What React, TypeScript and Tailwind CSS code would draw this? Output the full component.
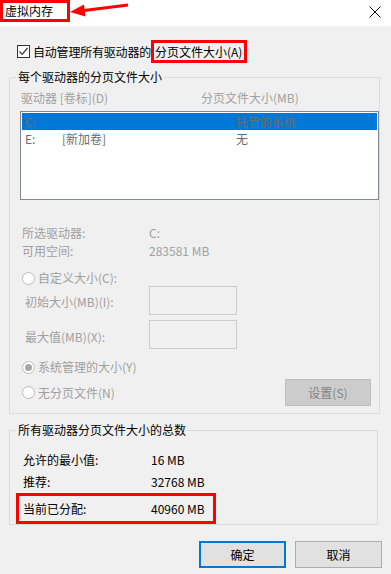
import React from 'react'

const font = { fontFamily: '"Noto Sans CJK SC", "Noto Sans", sans-serif' }

function Radio({ checked, label }: { checked?: boolean; label: string }) {
  return (
    <div className="flex items-center h-[18px]">
      <span className="ml-[12px] w-[13px] h-[13px] rounded-full border border-[#bcbcbc] bg-white flex items-center justify-center">
        {checked && <span className="w-[7px] h-[7px] rounded-full bg-[#a6a6a6]" />}
      </span>
      <span className="ml-[3px] text-[#a0a0a0]">{label}</span>
    </div>
  )
}

export default function App() {
  return (
    <div className="w-[391px] h-[574px] bg-[#f0f0f0] text-[12px] leading-[16px] text-black overflow-hidden" style={font}>
      {/* title bar */}
      <div className="relative h-[26px] bg-white flex items-start justify-between">
        <span className="h-[22px] w-[70px] border-[3px] border-[#ff0000] pl-[2px] flex items-center">虚拟内存</span>
        <svg className="absolute left-[60px] top-0" width="75" height="24" viewBox="0 0 75 24">
          <line x1="68" y1="5" x2="22" y2="10.7" stroke="#ff0000" strokeWidth="3" />
          <polygon points="10,12 25.5,16.5 24,4.5" fill="#ff0000" />
        </svg>
        <svg className="mt-[6px] mr-[10px]" width="12" height="12" viewBox="0 0 12 12">
          <path d="M0.5 0.5 L11.5 11.5 M11.5 0.5 L0.5 11.5" stroke="#111" strokeWidth="1" />
        </svg>
      </div>

      {/* auto manage checkbox */}
      <div className="mt-[14px] h-[23px] flex items-center">
        <span className="ml-[17px] w-[13px] h-[13px] border border-[#333] bg-white flex items-center justify-center">
          <svg width="11" height="11" viewBox="0 0 11 11">
            <path d="M1.5 5.5 L4.2 8.3 L9.5 2" fill="none" stroke="#333" strokeWidth="1.2" />
          </svg>
        </span>
        <span className="ml-[3px] tracking-[-0.2px]">自动管理所有驱动器的</span>
        <span className="h-[23px] border-[3px] border-[#ff0000] pl-[1px] pr-[2px] flex items-center">分页文件大小(A)</span>
      </div>

      {/* per-drive group */}
      <fieldset className="mt-[6px] ml-[9px] w-[369px] border border-[#dcdcdc] pb-[7px]">
        <legend className="ml-[6px] px-[2px]">每个驱动器的分页文件大小</legend>
        <div className="mt-[5px] pl-[11px] flex text-[#a0a0a0]">
          <span className="w-[180px]">驱动器 [卷标](D)</span>
          <span>分页文件大小(MB)</span>
        </div>
        <div className="mt-[5px] ml-[10px] w-[359px] h-[89px] border border-[#828790] bg-white p-[1px] text-[#6d6d6d]">
          <div className="h-[17px] bg-[#0078d7] flex items-center">
            <span className="pl-[3px] w-[214px]">C:</span>
            <span>托管的系统</span>
          </div>
          <div className="h-[17px] flex items-center">
            <span className="pl-[3px] w-[40px]">E:</span>
            <span className="w-[174px]">[新加卷]</span>
            <span>无</span>
          </div>
        </div>

        <div className="mt-[24px] text-[#a0a0a0]">
          <div className="h-[18px] flex items-center">
            <span className="pl-[12px] w-[139px]">所选驱动器:</span>
            <span>C:</span>
          </div>
          <div className="h-[18px] flex items-center">
            <span className="pl-[12px] w-[139px]">可用空间:</span>
            <span>283581 MB</span>
          </div>
        </div>

        <div className="mt-[9px]">
          <Radio label="自定义大小(C):" />
        </div>
        <div className="mt-[-1px] h-[29px] flex items-center text-[#a0a0a0]">
          <span className="pl-[15px] w-[139px] pt-[3px]">初始大小(MB)(I):</span>
          <span className="w-[88px] h-[29px] border border-[#cccccc] bg-[#f0f0f0]" />
        </div>
        <div className="mt-[5px] h-[29px] flex items-center text-[#a0a0a0]">
          <span className="pl-[15px] w-[139px] pt-[5px]">最大值(MB)(X):</span>
          <span className="w-[88px] h-[29px] border border-[#cccccc] bg-[#f0f0f0]" />
        </div>

        <div className="mt-[9px]">
          <Radio checked label="系统管理的大小(Y)" />
        </div>
        <div className="mt-[3px] h-[27px] flex items-center justify-between">
          <Radio label="无分页文件(N)" />
          <span className="mr-[8px] w-[86px] h-[27px] bg-[#cccccc] border border-[#bfbfbf] flex items-center justify-center text-[#838383]">
            设置(S)
          </span>
        </div>
      </fieldset>

      {/* totals group */}
      <fieldset className="mt-[8px] ml-[9px] w-[369px] border border-[#dcdcdc]">
        <legend className="ml-[6px] px-[2px]">所有驱动器分页文件大小的总数</legend>
        <div className="pt-[13px]">
          <div className="h-[18px] flex items-center">
            <span className="pl-[13px] w-[141px]">允许的最小值:</span>
            <span>16 MB</span>
          </div>
          <div className="mt-[4px] h-[18px] flex items-center">
            <span className="pl-[13px] w-[141px]">推荐:</span>
            <span>32768 MB</span>
          </div>
          <div className="mt-[2px] ml-[6px] w-[200px] h-[31px] border-[3px] border-[#ff0000] flex items-center">
            <span className="pl-[4px] w-[132px]">当前已分配:</span>
            <span>40960 MB</span>
          </div>
        </div>
      </fieldset>

      {/* buttons */}
      <div className="mt-[16px] flex justify-end pr-[9px] gap-[9px]">
        <span className="w-[87px] h-[27px] border-2 border-[#0078d7] bg-[#e1e1e1] flex items-center justify-center">确定</span>
        <span className="w-[87px] h-[27px] border border-[#adadad] bg-[#e1e1e1] flex items-center justify-center">取消</span>
      </div>
    </div>
  )
}
